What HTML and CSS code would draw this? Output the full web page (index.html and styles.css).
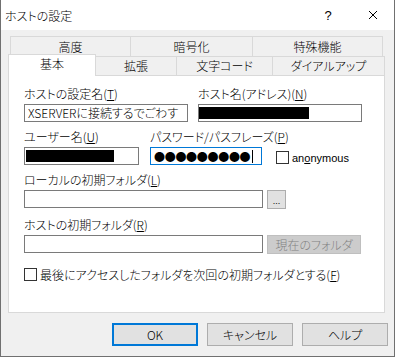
FILE: index.html
```html
<!DOCTYPE html>
<html lang="ja">
<head>
  <meta charset="UTF-8">
  <title>ホストの設定</title>
  <link rel="stylesheet" href="styles.css">
</head>
<body>
  <div class="window">
    <!-- Title bar -->
    <div class="titlebar">
      <span class="title">ホストの設定</span>
      <span class="title-btn help">?</span>
      <span class="title-btn close">
        <svg width="10" height="10" viewBox="0 0 10 10"><path d="M1 1L9 9M9 1L1 9" stroke="#000" stroke-width="1"/></svg>
      </span>
    </div>

    <!-- Tabs -->
    <div class="tabs">
      <div class="tab-row row-back">
        <div class="tab w-koudo">高度</div>
        <div class="tab w-angou">暗号化</div>
        <div class="tab w-tokushu">特殊機能</div>
      </div>
      <div class="tab-row row-front">
        <div class="tab active w-kihon">基本</div>
        <div class="tab w-kakuchou">拡張</div>
        <div class="tab w-moji">文字コード</div>
        <div class="tab w-dial">ダイアルアップ</div>
      </div>

      <div class="panel">
        <div class="row">
          <div class="field w-half">
            <div class="label">ホストの設定名(<u>T</u>)</div>
            <div class="input">XSERVERに接続するでごわす</div>
          </div>
          <div class="field w-half">
            <div class="label">ホスト名(アドレス)(<u>N</u>)</div>
            <div class="input"><span class="redact host-redact"></span></div>
          </div>
        </div>

        <div class="row row-user">
          <div class="field w-user">
            <div class="label">ユーザー名(<u>U</u>)</div>
            <div class="input"><span class="redact user-redact"></span></div>
          </div>
          <div class="field w-pass">
            <div class="label">パスワード/パスフレーズ(<u>P</u>)</div>
            <div class="input focused"><span class="dots">●●●●●●●●●</span><span class="caret"></span></div>
          </div>
          <label class="check anon">
            <span class="box"></span>
            <span class="anon-text">an<u>o</u>nymous</span>
          </label>
        </div>

        <div class="block block-local">
          <div class="label">ローカルの初期フォルダ(<u>L</u>)</div>
          <div class="input-line">
            <div class="input w-path"></div>
            <button class="btn small">...</button>
          </div>
        </div>

        <div class="block block-host">
          <div class="label">ホストの初期フォルダ(<u>R</u>)</div>
          <div class="input-line">
            <div class="input w-path"></div>
            <button class="btn disabled">現在のフォルダ</button>
          </div>
        </div>

        <label class="check last">
          <span class="box"></span>
          <span>最後にアクセスしたフォルダを次回の初期フォルダとする(<u>F</u>)</span>
        </label>
      </div>
    </div>

    <!-- Dialog buttons -->
    <div class="buttons">
      <button class="btn dlg default">OK</button>
      <button class="btn dlg">キャンセル</button>
      <button class="btn dlg">ヘルプ</button>
    </div>
  </div>
</body>
</html>
```

FILE: styles.css
```css
* {
  box-sizing: border-box;
}

body {
  margin: 0;
  font-family: "Noto Sans CJK JP", "Noto Sans", sans-serif;
  font-size: 12px;
  font-weight: 300;
  font-feature-settings: "palt";
  color: #000;
  background: #f0f0f0;
}

.window {
  width: 395px;
  height: 357px;
  border: 1px solid #707070;
  border-top: none;
  background: #f0f0f0;
  display: flex;
  flex-direction: column;
}

/* Title bar */
.titlebar {
  height: 30px;
  background: #fff;
  display: flex;
  align-items: center;
  padding-left: 4px;
}

.title {
  flex: 1;
  font-size: 12px;
}

.title-btn {
  width: 44px;
  height: 30px;
  display: flex;
  align-items: center;
  justify-content: center;
}

.help {
  font-family: "Liberation Sans", sans-serif;
  font-size: 13px;
}

.close svg {
  display: block;
  margin-left: 2px;
}

/* Tabs */
.tabs {
  margin: 6px 0 0 7px;
  width: 377px;
}

.tab-row {
  display: flex;
}

.row-back {
  height: 20px;
  margin-left: 2px;
}

.row-front {
  height: 19px;
  align-items: flex-end;
}

.tab {
  height: 100%;
  border: 1px solid #d9d9d9;
  border-bottom: none;
  display: flex;
  align-items: center;
  justify-content: center;
  background: #f0f0f0;
  line-height: 1;
}

.tab + .tab {
  margin-left: -1px;
}

.tab.active {
  height: 22px;
  margin-bottom: -1px;
  background: #fff;
  position: relative;
  z-index: 1;
  padding-bottom: 3px;
}

.w-koudo { width: 121px; }
.w-angou { width: 123px; }
.w-tokushu { width: 131px; }
.w-kihon { width: 88px; }
.w-kakuchou { width: 82px; }
.w-moji { width: 97px; }
.w-dial { width: 113px; }

/* Panel */
.panel {
  height: 238px;
  background: #fff;
  border: 1px solid #d9d9d9;
  padding: 11px 0 0 15px;
}

.row {
  display: flex;
  gap: 10px;
}

.row-user {
  margin-top: 8px;
  gap: 11px;
}

.field {
  display: flex;
  flex-direction: column;
}

.w-half { width: 164px; }
.w-user { width: 115px; }
.w-pass { width: 112px; }
.w-path { width: 239px; }

.label {
  height: 15px;
  line-height: 14px;
  margin-bottom: 2px;
  white-space: nowrap;
}

.input {
  height: 18px;
  border: 1px solid #7a7a7a;
  background: #fff;
  padding-left: 3px;
  display: flex;
  align-items: center;
  white-space: nowrap;
  line-height: 1;
}

.input.focused {
  border-color: #0078d7;
}

.redact {
  display: block;
  background: #000;
}

.host-redact {
  width: 110px;
  height: 12px;
  margin-left: -3px;
}

.user-redact {
  width: 88px;
  height: 12px;
  margin-left: -2px;
}

.dots {
  font-size: 11px;
  font-weight: 400;
  letter-spacing: -0.3px;
}

.caret {
  width: 1px;
  height: 13px;
  background: #000;
  margin-left: 2px;
}

.check {
  display: flex;
  align-items: center;
  gap: 3px;
  white-space: nowrap;
}

.box {
  width: 13px;
  height: 13px;
  border: 1px solid #333;
  background: #fff;
}

.anon {
  align-self: flex-end;
  margin: 0 0 1px 3px;
}

.anon-text {
  font-family: "Liberation Sans", sans-serif;
  font-size: 11px;
  font-weight: 400;
}

.block-local {
  margin-top: 8px;
}

.block-host {
  margin-top: 9px;
}

.input-line {
  display: flex;
  gap: 4px;
  align-items: flex-start;
}

.last {
  margin-top: 12px;
}

/* Buttons */
.btn {
  font-family: inherit;
  font-size: 12px;
  font-weight: 300;
  font-feature-settings: "palt";
  background: #e1e1e1;
  border: 1px solid #adadad;
  color: #000;
  padding: 0;
  line-height: 1;
}

.btn.small {
  width: 19px;
  height: 19px;
  font-size: 10px;
}

.btn.disabled {
  width: 94px;
  height: 19px;
  background: #cccccc;
  border-color: #bfbfbf;
  color: #838383;
}

.buttons {
  display: flex;
  justify-content: flex-end;
  gap: 9px;
  margin-top: 10px;
  padding-right: 6px;
}

.btn.dlg {
  width: 86px;
  height: 23px;
}

.btn.default {
  border: 2px solid #0078d7;
}
```
